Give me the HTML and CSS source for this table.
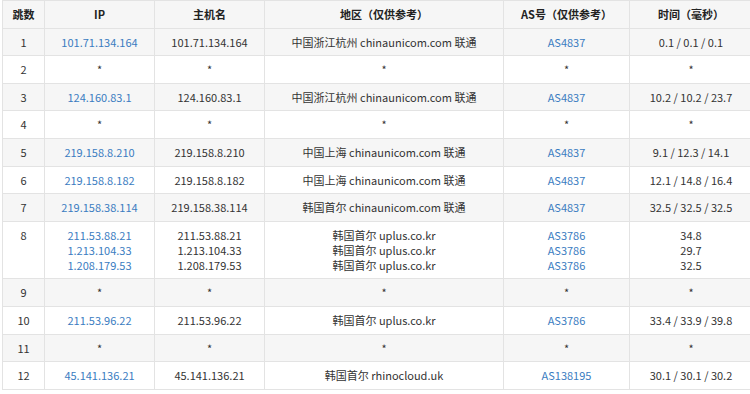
FILE: index.html
```html
<!DOCTYPE html>
<html lang="zh-CN">
<head>
    <meta charset="UTF-8">
    <meta name="viewport" content="width=device-width, initial-scale=1.0">
    <title>路由追踪</title>
    <link rel="stylesheet" href="styles.css">
</head>
<body>
    <table class="trace-table">
        <colgroup>
            <col class="col-hop">
            <col class="col-ip">
            <col class="col-host">
            <col class="col-area">
            <col class="col-as">
            <col class="col-time">
        </colgroup>
        <thead>
            <tr>
                <th>跳数</th>
                <th>IP</th>
                <th>主机名</th>
                <th>地区（仅供参考）</th>
                <th>AS号（仅供参考）</th>
                <th>时间（毫秒）</th>
            </tr>
        </thead>
        <tbody>
            <tr>
                <td>1</td>
                <td><a href="#">101.71.134.164</a></td>
                <td>101.71.134.164</td>
                <td>中国浙江杭州 chinaunicom.com 联通</td>
                <td><a href="#">AS4837</a></td>
                <td>0.1 / 0.1 / 0.1</td>
            </tr>
            <tr>
                <td>2</td>
                <td>*</td>
                <td>*</td>
                <td>*</td>
                <td>*</td>
                <td>*</td>
            </tr>
            <tr>
                <td>3</td>
                <td><a href="#">124.160.83.1</a></td>
                <td>124.160.83.1</td>
                <td>中国浙江杭州 chinaunicom.com 联通</td>
                <td><a href="#">AS4837</a></td>
                <td>10.2 / 10.2 / 23.7</td>
            </tr>
            <tr>
                <td>4</td>
                <td>*</td>
                <td>*</td>
                <td>*</td>
                <td>*</td>
                <td>*</td>
            </tr>
            <tr>
                <td>5</td>
                <td><a href="#">219.158.8.210</a></td>
                <td>219.158.8.210</td>
                <td>中国上海 chinaunicom.com 联通</td>
                <td><a href="#">AS4837</a></td>
                <td>9.1 / 12.3 / 14.1</td>
            </tr>
            <tr>
                <td>6</td>
                <td><a href="#">219.158.8.182</a></td>
                <td>219.158.8.182</td>
                <td>中国上海 chinaunicom.com 联通</td>
                <td><a href="#">AS4837</a></td>
                <td>12.1 / 14.8 / 16.4</td>
            </tr>
            <tr>
                <td>7</td>
                <td><a href="#">219.158.38.114</a></td>
                <td>219.158.38.114</td>
                <td>韩国首尔 chinaunicom.com 联通</td>
                <td><a href="#">AS4837</a></td>
                <td>32.5 / 32.5 / 32.5</td>
            </tr>
            <tr class="multi">
                <td>8</td>
                <td><a href="#">211.53.88.21</a><br><a href="#">1.213.104.33</a><br><a href="#">1.208.179.53</a></td>
                <td>211.53.88.21<br>1.213.104.33<br>1.208.179.53</td>
                <td>韩国首尔 uplus.co.kr<br>韩国首尔 uplus.co.kr<br>韩国首尔 uplus.co.kr</td>
                <td><a href="#">AS3786</a><br><a href="#">AS3786</a><br><a href="#">AS3786</a></td>
                <td>34.8<br>29.7<br>32.5</td>
            </tr>
            <tr>
                <td>9</td>
                <td>*</td>
                <td>*</td>
                <td>*</td>
                <td>*</td>
                <td>*</td>
            </tr>
            <tr>
                <td>10</td>
                <td><a href="#">211.53.96.22</a></td>
                <td>211.53.96.22</td>
                <td>韩国首尔 uplus.co.kr</td>
                <td><a href="#">AS3786</a></td>
                <td>33.4 / 33.9 / 39.8</td>
            </tr>
            <tr>
                <td>11</td>
                <td>*</td>
                <td>*</td>
                <td>*</td>
                <td>*</td>
                <td>*</td>
            </tr>
            <tr>
                <td>12</td>
                <td><a href="#">45.141.136.21</a></td>
                <td>45.141.136.21</td>
                <td>韩国首尔 rhinocloud.uk</td>
                <td><a href="#">AS138195</a></td>
                <td>30.1 / 30.1 / 30.2</td>
            </tr>
        </tbody>
    </table>
</body>
</html>
```

FILE: styles.css
```css
body {
    margin: 0;
    background-color: #fff;
    font-family: "Noto Sans CJK SC", "Noto Sans", sans-serif;
    font-size: 11px;
    color: #333;
    overflow: hidden;
}
.trace-table {
    margin-left: 2px;
    width: 750px;
    border-collapse: collapse;
    table-layout: fixed;
}
.col-hop { width: 42px; }
.col-ip { width: 110px; }
.col-host { width: 110px; }
.col-area { width: 239px; }
.col-as { width: 126px; }
.col-time { width: 123px; }
.trace-table th,
.trace-table td {
    border: 1px solid #e3e3e3;
    text-align: center;
    vertical-align: top;
    line-height: 15px;
    padding: 6px 4px 5.6px;
    white-space: nowrap;
}
.trace-table th {
    font-weight: bold;
    color: #222;
    background-color: #f6f6f6;
}
.trace-table tbody tr:nth-child(odd) td {
    background-color: #f6f6f6;
}
.trace-table a {
    color: #3a7cc1;
    text-decoration: none;
}
.multi td {
    line-height: 15px;
}
```
